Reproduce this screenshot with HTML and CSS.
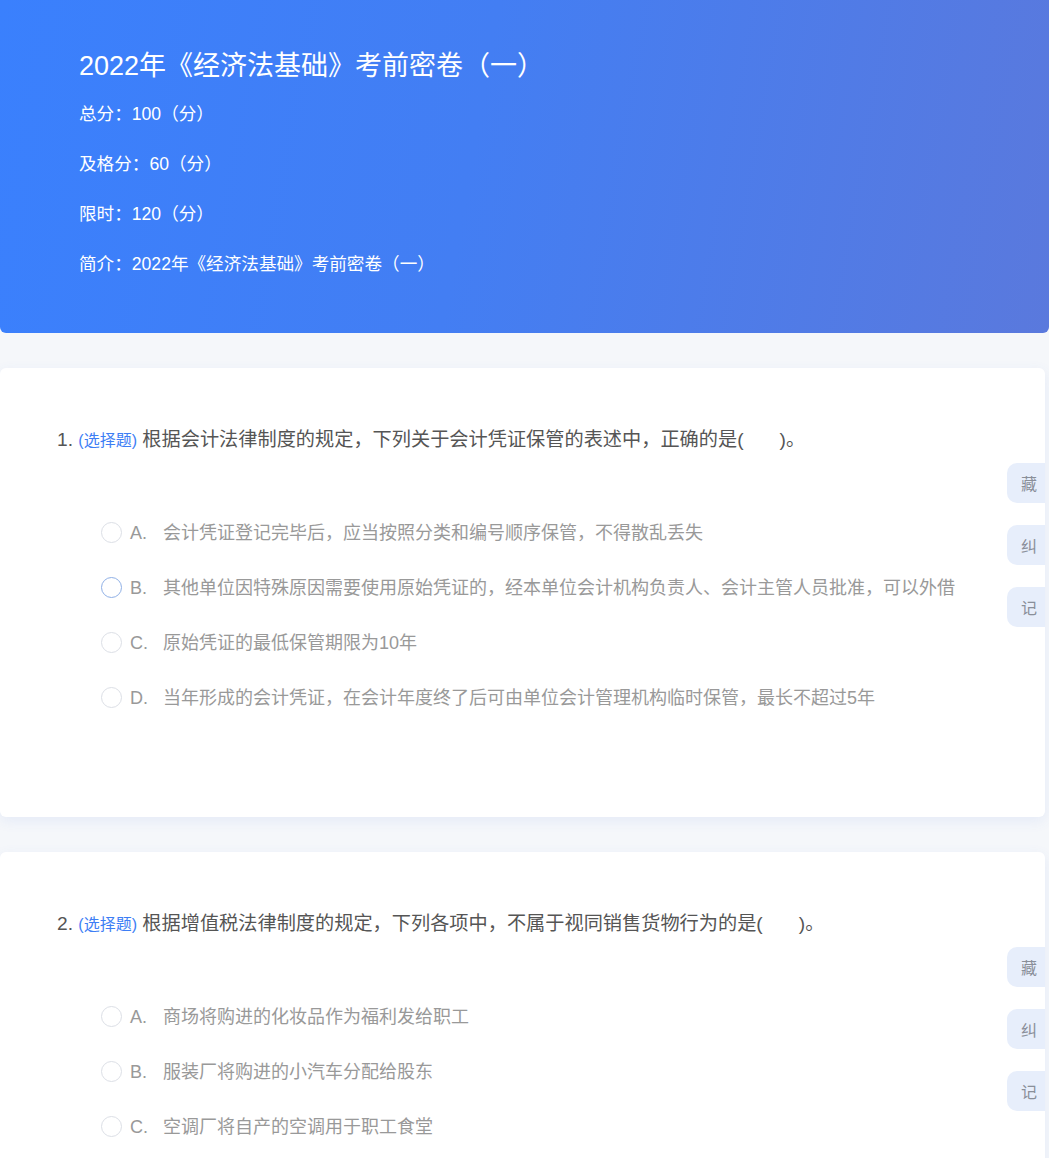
FILE: index.html
```html
<!DOCTYPE html>
<html lang="zh-CN">
<head>
<meta charset="utf-8">
<title>2022年《经济法基础》考前密卷（一）</title>
<link rel="stylesheet" href="styles.css">
</head>
<body>
<header class="hero">
  <h1 class="hero-title">2022年《经济法基础》考前密卷（一）</h1>
  <p class="hero-line">总分：100（分）</p>
  <p class="hero-line">及格分：60（分）</p>
  <p class="hero-line">限时：120（分）</p>
  <p class="hero-line">简介：2022年《经济法基础》考前密卷（一）</p>
</header>

<main class="list">
  <section class="card">
    <div class="question"><span class="num">1.</span> <span class="type">(选择题)</span> 根据会计法律制度的规定，下列关于会计凭证保管的表述中，正确的是(<span class="blank"></span>)。</div>
    <ul class="options">
      <li class="option"><span class="radio"></span><span class="label"><span class="letter">A.</span>会计凭证登记完毕后，应当按照分类和编号顺序保管，不得散乱丢失</span></li>
      <li class="option"><span class="radio radio-hover"></span><span class="label"><span class="letter">B.</span>其他单位因特殊原因需要使用原始凭证的，经本单位会计机构负责人、会计主管人员批准，可以外借</span></li>
      <li class="option"><span class="radio"></span><span class="label"><span class="letter">C.</span>原始凭证的最低保管期限为10年</span></li>
      <li class="option"><span class="radio"></span><span class="label"><span class="letter">D.</span>当年形成的会计凭证，在会计年度终了后可由单位会计管理机构临时保管，最长不超过5年</span></li>
    </ul>
    <div class="side">
      <span class="side-btn">藏</span>
      <span class="side-btn">纠</span>
      <span class="side-btn">记</span>
    </div>
  </section>

  <section class="card">
    <div class="question"><span class="num">2.</span> <span class="type">(选择题)</span> 根据增值税法律制度的规定，下列各项中，不属于视同销售货物行为的是(<span class="blank"></span>)。</div>
    <ul class="options">
      <li class="option"><span class="radio"></span><span class="label"><span class="letter">A.</span>商场将购进的化妆品作为福利发给职工</span></li>
      <li class="option"><span class="radio"></span><span class="label"><span class="letter">B.</span>服装厂将购进的小汽车分配给股东</span></li>
      <li class="option"><span class="radio"></span><span class="label"><span class="letter">C.</span>空调厂将自产的空调用于职工食堂</span></li>
      <li class="option"><span class="radio"></span><span class="label"><span class="letter">D.</span>食品厂将自产的月饼赠送给关联企业</span></li>
    </ul>
    <div class="side">
      <span class="side-btn">藏</span>
      <span class="side-btn">纠</span>
      <span class="side-btn">记</span>
    </div>
  </section>
</main>
</body>
</html>
```

FILE: styles.css
```css
* { box-sizing: border-box; }

html, body {
  margin: 0;
  padding: 0;
}

body {
  background: #f5f7fa;
  font-family: "Liberation Sans", "Noto Sans CJK SC", sans-serif;
  overflow: hidden;
}

.hero {
  background: linear-gradient(100deg, #3a80fd 0%, #437ef3 45%, #5a79dd 100%);
  color: #ffffff;
  padding: 48px 0 44px 79px;
  border-radius: 0 0 6px 6px;
}

.hero-title {
  margin: 0 0 5px;
  font-size: 27px;
  font-weight: normal;
  line-height: 36px;
}

.hero-line {
  margin: 0;
  font-size: 17.6px;
  line-height: 50px;
}

.list {
  display: flex;
  flex-direction: column;
  gap: 35px;
  padding-top: 35px;
  margin-right: 4px;
}

.card {
  position: relative;
  background: #ffffff;
  border-radius: 6px;
  box-shadow: 0 4px 14px rgba(70, 110, 220, 0.09);
  padding: 57px 0 92px 57px;
}

.question {
  font-size: 19.2px;
  line-height: 30px;
  color: #555555;
}

.type {
  font-size: 16px;
  color: #3d7ef5;
}

.blank {
  display: inline-block;
  width: 36px;
}

.options {
  list-style: none;
  margin: 49px 0 0;
  padding: 0 0 0 44px;
}

.option {
  display: flex;
  align-items: center;
  height: 55px;
  font-size: 18px;
  color: #999999;
}

.radio {
  width: 21px;
  height: 21px;
  border: 1px solid #dcdfe6;
  border-radius: 50%;
  margin-right: 8px;
  flex: none;
}

.radio-hover {
  border-color: #8fb0e6;
}

.label {
  line-height: 26px;
}

.letter {
  display: inline-block;
  width: 33px;
}

.side {
  position: absolute;
  top: 95px;
  right: 0;
  display: flex;
  flex-direction: column;
  gap: 22px;
}

.side-btn {
  width: 38px;
  height: 40px;
  padding-left: 6px;
  display: flex;
  align-items: center;
  justify-content: center;
  background: #e7eefb;
  border-radius: 10px 0 0 10px;
  font-size: 16px;
  color: #8a8f99;
}
```
